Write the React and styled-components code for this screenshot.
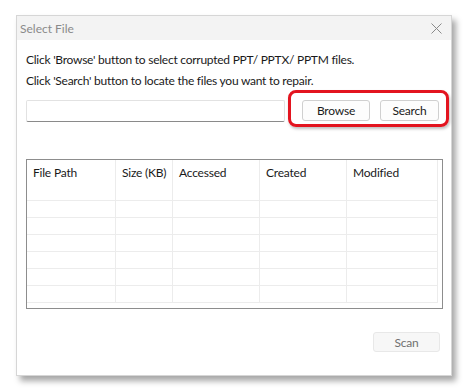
import React from "react";
import styled, { createGlobalStyle } from "styled-components";

const Global = createGlobalStyle`
  html, body { margin: 0; padding: 0; background: #ffffff; }
  body { font-family: Lato, "Noto Sans", sans-serif; }
`;

const Page = styled.div`
  width: 468px;
  height: 392px;
  padding: 15px 0 0 16px;
  box-sizing: border-box;
`;

const Window = styled.div`
  width: 436px;
  height: 361px;
  background: #ffffff;
  border: 1px solid #d6d6d6;
  box-sizing: border-box;
  box-shadow: 4px 5px 6px rgba(0, 0, 0, 0.35);
  display: flex;
  flex-direction: column;
`;

const TitleBar = styled.div`
  height: 24px;
  flex-shrink: 0;
  background: #f3f3f3;
  display: flex;
  align-items: center;
  justify-content: space-between;
  padding: 0 9px 0 3px;
`;

const Title = styled.span`
  font-size: 12px;
  color: #8a8a8a;
`;

const Body = styled.div`
  flex: 1;
  display: flex;
  flex-direction: column;
  padding: 9px 4px 0 9px;
`;

const Line = styled.div`
  font-size: 12px;
  letter-spacing: -0.25px;
  color: #1a1a1a;
  height: 21px;
  line-height: 21px;
`;

const Row = styled.div`
  display: flex;
  align-items: flex-start;
  margin-top: -1px;
`;

const PathInput = styled.div`
  flex-shrink: 0;
  margin-top: 10px;
  width: 259px;
  height: 22px;
  box-sizing: border-box;
  border: 1px solid #e2e2e2;
  border-bottom: 1px solid #8a8a8a;
  border-radius: 2px;
`;

const Highlight = styled.div`
  flex-shrink: 0;
  margin-left: 3px;
  display: flex;
  gap: 10px;
  padding: 7px 7px 3px 11px;
  border: 3px solid #e3141f;
  border-radius: 8px;
  box-shadow: 1px 2px 3px rgba(0, 0, 0, 0.25);
`;

const Button = styled.div`
  flex-shrink: 0;
  width: ${(p) => p.$w}px;
  height: ${(p) => p.$h || 21}px;
  box-sizing: border-box;
  border: 1px solid ${(p) => (p.$disabled ? "#e8e8e8" : "#d0d0d0")};
  border-radius: 3px;
  background: ${(p) => (p.$disabled ? "#f7f7f7" : "#fdfdfd")};
  color: ${(p) => (p.$disabled ? "#707070" : "#1a1a1a")};
  font-size: 12px;
  letter-spacing: -0.2px;
  display: flex;
  align-items: center;
  justify-content: center;
`;

const Table = styled.div`
  margin-top: 32px;
  width: 417px;
  height: 150px;
  box-sizing: border-box;
  border: 1px solid #8d8d8d;
  overflow: hidden;
`;

const Grid = styled.div`
  display: grid;
  grid-template-columns: 89px 57px 87px 87px 91px;
`;

const HeadCell = styled.div`
  height: 41px;
  padding: 5px 0 0 6px;
  box-sizing: border-box;
  font-size: 12px;
  letter-spacing: -0.2px;
  color: #1a1a1a;
  border-right: 1px solid #ececec;
  border-bottom: 1px solid #ececec;
`;

const Cell = styled.div`
  height: 17px;
  box-sizing: border-box;
  border-right: 1px solid #ececec;
  border-bottom: 1px solid #ececec;
`;

const Footer = styled.div`
  display: flex;
  justify-content: flex-end;
  padding: 23px 7px 0 0;
`;

const CloseIcon = () => (
  <svg width="11" height="11" viewBox="0 0 11 11">
    <path d="M0.5 0.5 L10.5 10.5 M10.5 0.5 L0.5 10.5" stroke="#8a8a8a" strokeWidth="1" fill="none" />
  </svg>
);

const headers = ["File Path", "Size (KB)", "Accessed", "Created", "Modified"];

export default function App() {
  const rows = Array.from({ length: 6 });
  return (
    <>
      <Global />
      <Page>
        <Window>
          <TitleBar>
            <Title>Select File</Title>
            <CloseIcon />
          </TitleBar>
          <Body>
            <Line>Click 'Browse' button to select corrupted PPT/ PPTX/ PPTM files.</Line>
            <Line>Click 'Search' button to locate the files you want to repair.</Line>
            <Row>
              <PathInput />
              <Highlight>
                <Button $w={68}>Browse</Button>
                <Button $w={59}>Search</Button>
              </Highlight>
            </Row>
            <Table>
              <Grid>
                {headers.map((h) => (
                  <HeadCell key={h}>{h}</HeadCell>
                ))}
                {rows.map((_, r) => headers.map((h) => <Cell key={r + h} />))}
              </Grid>
            </Table>
            <Footer>
              <Button $w={67} $h={20} $disabled>Scan</Button>
            </Footer>
          </Body>
        </Window>
      </Page>
    </>
  );
}
